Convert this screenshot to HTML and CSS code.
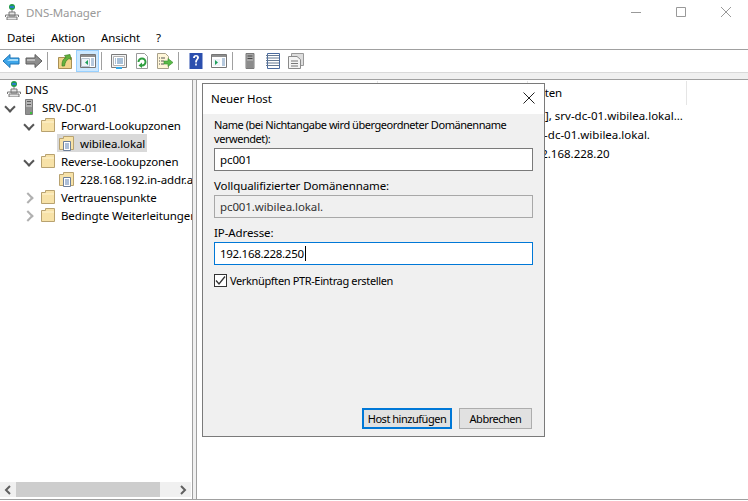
FILE: index.html
```html
<!DOCTYPE html>
<html lang="de">
<head>
    <meta charset="UTF-8">
    <meta name="viewport" content="width=device-width, initial-scale=1.0">
    <title>DNS-Manager</title>
    <link rel="stylesheet" href="styles.css">
</head>
<body>
    <svg class="defs">
        <symbol id="dns" viewBox="0 0 16 16">
            <path d="M3 16V13H13V16ZM5 12V8H11V12Z" fill="#e6e6e6" stroke="#777"/>
            <path d="M8 6V8M1.500 13V11H14.500V13" fill="none" stroke="#777"/>
            <circle cx="8" cy="3" r="3" fill="#1f9a4a"/>
            <path d="M6 2H10V4H6Z" fill="#2a7fc9"/>
        </symbol>
        <symbol id="server" viewBox="0 0 16 16">
            <path d="M4.500 .5H11.500V15.500H4.500Z" fill="#b4b4b4" stroke="#7d7d7d"/>
            <path d="M6 2.500H10M6 5.500H10" stroke="#5f5f5f"/>
            <path d="M5 8H11V15H5Z" fill="#8f8f8f"/>
            <path d="M9 13H11V15H9Z" fill="#3cc03c"/>
        </symbol>
        <symbol id="folder" viewBox="0 0 16 16">
            <path d="M1.500 14.500V3.500H5.500V1.500H14.500V14.500Z" fill="#f7e2a8" stroke="#b8a270"/>
            <path d="M2 5H14" stroke="#fff4d2"/>
        </symbol>
        <symbol id="zone" viewBox="0 0 16 16">
            <path d="M.5 14.500V3.500H4.500V1.500H14.500V14.500Z" fill="#f7e2a8" stroke="#b8a270"/>
            <path d="M4.500 6.500H11.500V15.500H4.500Z" fill="#fff" stroke="#6d7f99"/>
            <path d="M6 9H10M6 11H10M6 13H10" stroke="#5a7fb0"/>
        </symbol>
        <symbol id="back" viewBox="0 0 18 16">
            <path d="M1 8L8 1.500V5H17V11H8V14.500Z" fill="#3ea6ea" stroke="#1f74b5"/>
            <path d="M8 6H16V8H5Z" fill="#a5dcfa"/>
        </symbol>
        <symbol id="forward" viewBox="0 0 18 16">
            <path d="M17 8L10 1.500V5H1V11H10V14.500Z" fill="#8d8d8d" stroke="#5e5e5e"/>
            <path d="M2 6H10V8H2Z" fill="#bdbdbd"/>
        </symbol>
        <symbol id="up" viewBox="0 0 16 16">
            <path d="M1.500 15.500V4.500H14.500V15.500Z" fill="#f0d48a" stroke="#a88f55"/>
            <path d="M5 13C5 8 6 6 9 4.500L7.500 2.500L13 1.500L14 6.500L12 5.500C9.500 7 8 9 7.500 13Z" fill="#63b13c" stroke="#3c8124" stroke-width=".7"/>
        </symbol>
        <symbol id="panel" viewBox="0 0 16 16">
            <path d="M.5 1.500H15.500V14.500H.5Z" fill="#fff" stroke="#767676"/>
            <path d="M1 2H15V4H1Z" fill="#8e8e8e"/>
            <path d="M1.500 5.500H9.500V13.500H1.500Z" fill="#eef3f8" stroke="#b8c4d0"/>
            <path d="M11 6H14M11 8H14M11 10H14M11 12H14" stroke="#6f94bd"/>
            <path d="M8 7V12L5 9.500Z" fill="#1ea05a"/>
        </symbol>
        <symbol id="props" viewBox="0 0 16 16">
            <path d="M.5 1.500H15.500V14.500H.5Z" fill="#f4f4f4" stroke="#7b7b7b"/>
            <path d="M2.500 3.500H13.500V12.500H2.500Z" fill="#fff" stroke="#b0b0b0"/>
            <path d="M4 6H5M6 6H12M4 8H5M6 8H12M4 10H5M6 10H12" stroke="#4f7fae"/>
            <path d="M5 14H11V16H5Z" fill="#36a9e8"/>
        </symbol>
        <symbol id="refresh" viewBox="0 0 16 16">
            <path d="M2.500 .5H10.500L13.500 3.500V15.500H2.500Z" fill="#fff" stroke="#9a9a9a"/>
            <path d="M4.500 9A3.500 3.500 0 1 1 8 12.500" fill="none" stroke="#2f9e3f" stroke-width="2"/>
            <path d="M8 9.500V15L4.500 12.500Z" fill="#2f9e3f"/>
        </symbol>
        <symbol id="export" viewBox="0 0 16 16">
            <path d="M.5 .5H8.500L11.500 3.500V15.500H.5Z" fill="#fff6d8" stroke="#a8a08a"/>
            <path d="M2 5H3M4 5H8M2 8H3M4 8H7M2 11H3M4 11H7" stroke="#555"/>
            <path d="M7 8H11V5.500L16 9.500L11 13.500V11H7Z" fill="#58b947" stroke="#3b8f2f" stroke-width=".6"/>
        </symbol>
        <symbol id="help" viewBox="0 0 16 16">
            <path d="M1.500 0H14.500V16H1.500Z" fill="#2b4fae"/>
            <path d="M5 5C5 3 6.500 2 8 2C10 2 11 3.200 11 4.800C11 6.500 8.800 7 8.800 9.500H7.200C7.200 6.500 9 6 9 4.800C9 4 8.600 3.600 8 3.600C7.200 3.600 7 4.300 7 5ZM7.200 10.500H8.800V12.500H7.200Z" fill="#fff"/>
        </symbol>
        <symbol id="mmc" viewBox="0 0 16 16">
            <path d="M.5 1.500H15.500V14.500H.5Z" fill="#fff" stroke="#767676"/>
            <path d="M1 2H15V4H1Z" fill="#8e8e8e"/>
            <path d="M2 6H9V13H2Z" fill="#eef3f8"/>
            <path d="M11 6H14M11 8H14M11 10H14M11 12H14" stroke="#6f94bd"/>
            <path d="M4 7V12L7 9.500Z" fill="#1ea05a"/>
        </symbol>
        <symbol id="tower" viewBox="0 0 16 16">
            <path d="M4 .5H12V15.500H4Z" fill="#a8a8a8" stroke="#7a7a7a"/>
            <path d="M5.500 3H10.500M5.500 5.500H10.500" stroke="#444"/>
            <path d="M5 8H11V15H5Z" fill="#8c8c8c"/>
        </symbol>
        <symbol id="list" viewBox="0 0 16 16">
            <path d="M2.500 .5H14.500V15.500H2.500Z" fill="#fff" stroke="#4a6a9e"/>
            <path d="M1 2.500H14M1 5H14M1 7.500H14M1 10H14M1 12.500H14" stroke="#667a93"/>
        </symbol>
        <symbol id="copy" viewBox="0 0 16 16">
            <path d="M3.500 .5H15.500V12.500H3.500Z" fill="#ddd" stroke="#999"/>
            <path d="M.5 3.500H9L12.500 6.500V15.500H.5Z" fill="#f4f4f4" stroke="#8a8a8a"/>
            <path d="M3 8H10M3 10.500H10M3 13H10" stroke="#777"/>
        </symbol>
    </svg>

    <div class="titlebar">
        <svg class="ico"><use href="#dns"/></svg>
        <span class="title_text">DNS-Manager</span>
        <div class="win_controls">
            <span class="win_btn"><svg width="10" height="10"><path d="M0 5.500H10" stroke="#999"/></svg></span>
            <span class="win_btn"><svg width="10" height="10"><path d="M.5 .5H9.500V9.500H.5Z" fill="none" stroke="#999"/></svg></span>
            <span class="win_btn"><svg width="10" height="10"><path d="M0 0L10 10M10 0L0 10" stroke="#999"/></svg></span>
        </div>
    </div>

    <div class="menubar">
        <span>Datei</span>
        <span>Aktion</span>
        <span>Ansicht</span>
        <span>?</span>
    </div>

    <div class="toolbar">
        <span class="tool"><svg class="ico_wide"><use href="#back"/></svg></span>
        <span class="tool"><svg class="ico_wide"><use href="#forward"/></svg></span>
        <span class="sep"></span>
        <span class="tool"><svg class="ico"><use href="#up"/></svg></span>
        <span class="tool active"><svg class="ico"><use href="#panel"/></svg></span>
        <span class="sep"></span>
        <span class="tool"><svg class="ico"><use href="#props"/></svg></span>
        <span class="tool"><svg class="ico"><use href="#refresh"/></svg></span>
        <span class="tool"><svg class="ico"><use href="#export"/></svg></span>
        <span class="sep"></span>
        <span class="tool"><svg class="ico"><use href="#help"/></svg></span>
        <span class="tool"><svg class="ico"><use href="#mmc"/></svg></span>
        <span class="sep"></span>
        <span class="tool"><svg class="ico"><use href="#tower"/></svg></span>
        <span class="tool"><svg class="ico"><use href="#list"/></svg></span>
        <span class="tool"><svg class="ico"><use href="#copy"/></svg></span>
    </div>
    <div class="strip"></div>

    <div class="main">
        <section class="left_pane">
            <div class="tree">
                <div class="row root">
                    <span class="node"><svg class="ico"><use href="#dns"/></svg><span class="label">DNS</span></span>
                </div>
                <div class="row d1">
                    <span class="toggle open"></span>
                    <span class="node"><svg class="ico"><use href="#server"/></svg><span class="label">SRV-DC-01</span></span>
                </div>
                <div class="row d2">
                    <span class="toggle open"></span>
                    <span class="node"><svg class="ico"><use href="#folder"/></svg><span class="label">Forward-Lookupzonen</span></span>
                </div>
                <div class="row d3">
                    <span class="toggle"></span>
                    <span class="node selected"><svg class="ico"><use href="#zone"/></svg><span class="label">wibilea.lokal</span></span>
                </div>
                <div class="row d2">
                    <span class="toggle open"></span>
                    <span class="node"><svg class="ico"><use href="#folder"/></svg><span class="label">Reverse-Lookupzonen</span></span>
                </div>
                <div class="row d3">
                    <span class="toggle"></span>
                    <span class="node"><svg class="ico"><use href="#zone"/></svg><span class="label">228.168.192.in-addr.arpa</span></span>
                </div>
                <div class="row d2">
                    <span class="toggle closed"></span>
                    <span class="node"><svg class="ico"><use href="#folder"/></svg><span class="label">Vertrauenspunkte</span></span>
                </div>
                <div class="row d2">
                    <span class="toggle closed"></span>
                    <span class="node"><svg class="ico"><use href="#folder"/></svg><span class="label">Bedingte Weiterleitungen</span></span>
                </div>
            </div>
            <div class="hscroll">
                <span class="arrow"><svg width="8" height="10"><path d="M6 1L2 5L6 9" fill="none" stroke="#606060" stroke-width="2"/></svg></span>
                <span class="thumb"></span>
                <span class="hscroll_rest"></span>
                <span class="arrow"><svg width="8" height="10"><path d="M2 1L6 5L2 9" fill="none" stroke="#606060" stroke-width="2"/></svg></span>
            </div>
        </section>

        <section class="right_pane">
            <div class="list_head">
                <span class="col_name"></span>
                <span class="col_type"></span>
                <span class="col_data">Daten</span>
            </div>
            <div class="list_row"><span class="col_name"></span><span class="col_type"></span><span class="col_data">[39], srv-dc-01.wibilea.lokal...</span></div>
            <div class="list_row"><span class="col_name"></span><span class="col_type"></span><span class="col_data">srv-dc-01.wibilea.lokal.</span></div>
            <div class="list_row"><span class="col_name"></span><span class="col_type"></span><span class="col_data">192.168.228.20</span></div>
        </section>
    </div>

    <div class="dialog">
        <div class="dialog_title">
            <span>Neuer Host</span>
            <svg width="12" height="12"><path d="M.5 .5L11.500 11.500M11.500 .5L.5 11.500" stroke="#222"/></svg>
        </div>
        <div class="dialog_body">
            <label class="field_label tight">Name (bei Nichtangabe wird übergeordneter Domänenname verwendet):</label>
            <div class="field">pc001</div>
            <label class="field_label">Vollqualifizierter Domänenname:</label>
            <div class="field readonly">pc001.wibilea.lokal.</div>
            <label class="field_label">IP-Adresse:</label>
            <div class="field focus"><span class="ip_text">192.168.228.250</span><span class="caret"></span></div>
            <div class="check_line">
                <span class="checkbox"><svg width="11" height="11"><path d="M1 5.500L4 9L10 1.500" fill="none" stroke="#333" stroke-width="1.300"/></svg></span>
                <span>Verknüpften PTR-Eintrag erstellen</span>
            </div>
            <div class="buttons">
                <button class="default">Host hinzufügen</button>
                <button>Abbrechen</button>
            </div>
        </div>
    </div>
</body>
</html>
```

FILE: styles.css
```css
* {
    margin: 0;
    padding: 0;
    box-sizing: border-box;
}

body {
    width: 748px;
    height: 501px;
    overflow: hidden;
    display: flex;
    flex-direction: column;
    background: #fff;
    font-family: "Noto Sans", sans-serif;
    font-size: 11.5px;
    letter-spacing: -.1px;
    color: #000;
}

.defs {
    display: none;
}

.ico {
    width: 16px;
    height: 16px;
    flex: none;
}

.ico_wide {
    width: 18px;
    height: 16px;
    flex: none;
}

.titlebar {
    height: 25px;
    flex: none;
    display: flex;
    align-items: center;
    padding: 0 0 1px 4px;
}

.title_text {
    margin-left: 6px;
    color: #999;
}

.win_controls {
    margin-left: auto;
    display: flex;
}

.win_btn {
    width: 45px;
    display: flex;
    justify-content: center;
}

.menubar {
    height: 24px;
    flex: none;
    display: flex;
    align-items: center;
    padding-left: 7px;
    gap: 16px;
}

.toolbar {
    height: 24px;
    flex: none;
    border-top: 1px solid #a0a0a0;
    border-bottom: 1px solid #d9d9d9;
    display: flex;
    align-items: center;
    gap: 2px;
}

.tool {
    width: 21px;
    height: 20px;
    display: flex;
    align-items: center;
    justify-content: center;
}

.tool.active {
    background: #cce8ff;
    box-shadow: 0 0 0 1px #99d1ff;
}

.sep {
    width: 1px;
    height: 18px;
    margin: 0 4px 0 1px;
    background: #a0a0a0;
}

.strip {
    height: 7px;
    flex: none;
    background: #f0f0f0;
    border-bottom: 1px solid #a0a0a0;
}

.main {
    height: 420px;
    flex: none;
    display: flex;
    background: #f0f0f0;
    border-bottom: 1px solid #a0a0a0;
}

.left_pane {
    width: 193px;
    display: flex;
    flex-direction: column;
    background: #fff;
    border-right: 1px solid #a0a0a0;
}

.tree {
    flex: 1;
    overflow: hidden;
}

.row {
    height: 18px;
    display: flex;
    align-items: center;
    white-space: nowrap;
}

.root { padding-left: 4px; }
.d1 { padding-left: 1px; }
.d2 { padding-left: 20px; }
.d3 { padding-left: 39px; }

.toggle {
    width: 16px;
    height: 16px;
    flex: none;
    position: relative;
}

.toggle.open::before {
    content: "";
    position: absolute;
    left: 5px;
    top: 4px;
    width: 6px;
    height: 6px;
    border-right: 2px solid #555;
    border-bottom: 2px solid #555;
    transform: rotate(45deg);
}

.toggle.closed::before {
    content: "";
    position: absolute;
    left: 4px;
    top: 5px;
    width: 6px;
    height: 6px;
    border-right: 2px solid #b0b0b0;
    border-top: 2px solid #b0b0b0;
    transform: rotate(45deg);
}

.node {
    height: 18px;
    display: flex;
    align-items: center;
    margin-left: 2px;
    padding-left: 2px;
    padding-right: 2px;
}

.root .node {
    margin-left: 0;
}

.root .label {
    margin-left: 3px;
}

.node.selected {
    background: #d9d9d9;
}

.label {
    margin-left: 5px;
}

.hscroll {
    height: 15px;
    flex: none;
    margin: 0 1px 2px 0;
    display: flex;
    background: #f0f0f0;
}

.arrow {
    width: 16px;
    display: flex;
    align-items: center;
    justify-content: center;
}

.thumb {
    width: 144px;
    background: #cdcdcd;
}

.hscroll_rest {
    flex: 1;
}

.right_pane {
    margin-left: 3px;
    flex: 1;
    background: #fff;
    border-left: 1px solid #a0a0a0;
}

.list_head {
    height: 26px;
    display: flex;
    align-items: center;
}

.list_head span {
    height: 24px;
    line-height: 24px;
    border-right: 1px solid #e5e5e5;
}

.list_row {
    height: 19px;
    display: flex;
    align-items: center;
    white-space: nowrap;
    letter-spacing: 0;
}

.col_name {
    width: 181px;
}

.col_type {
    width: 150px;
}

.col_data {
    width: 159px;
}

.list_head .col_data {
    padding-left: 2px;
}

.dialog {
    position: absolute;
    left: 202px;
    top: 83px;
    width: 343px;
    height: 354px;
    display: flex;
    flex-direction: column;
    border: 1px solid #7a7a7a;
    background: #f0f0f0;
}

.dialog_title {
    height: 30px;
    flex: none;
    display: flex;
    align-items: center;
    justify-content: space-between;
    padding: 0 9px 2px 8px;
    background: #fff;
}

.dialog_body {
    flex: 1;
    display: flex;
    flex-direction: column;
    padding: 4px 11px 7px 11px;
    color: #000;
}

.field_label {
    line-height: 14px;
    margin-bottom: 2px;
}

.field_label.tight {
    font-size: 11px;
    letter-spacing: -.45px;
}

.field {
    height: 23px;
    flex: none;
    margin-bottom: 8px;
    padding-left: 5px;
    display: flex;
    align-items: center;
    background: #fff;
    border: 1px solid #7a7a7a;
    white-space: nowrap;
}

.field.readonly {
    background: #f0f0f0;
    border-color: #a8a8a8;
    color: #333;
}

.field.focus {
    border-color: #0078d7;
}

.ip_text {
    letter-spacing: -.3px;
}

.caret {
    width: 1px;
    height: 15px;
    margin-left: 1px;
    background: #000;
}

.check_line {
    display: flex;
    align-items: center;
    gap: 3px;
    margin-top: 1px;
    line-height: 13px;
    font-size: 11px;
    letter-spacing: -.36px;
}

.checkbox {
    width: 13px;
    height: 13px;
    display: flex;
    align-items: center;
    justify-content: center;
    background: #fff;
    border: 1px solid #333;
}

.buttons {
    margin-top: auto;
    margin-right: 1px;
    display: flex;
    justify-content: flex-end;
    gap: 7px;
}

button {
    width: 73px;
    height: 21px;
    background: #e1e1e1;
    border: 1px solid #adadad;
    font: inherit;
    font-size: 11px;
    letter-spacing: -.48px;
    color: #000;
    white-space: nowrap;
}

button.default {
    width: 90px;
    border: 2px solid #0078d7;
}
```
